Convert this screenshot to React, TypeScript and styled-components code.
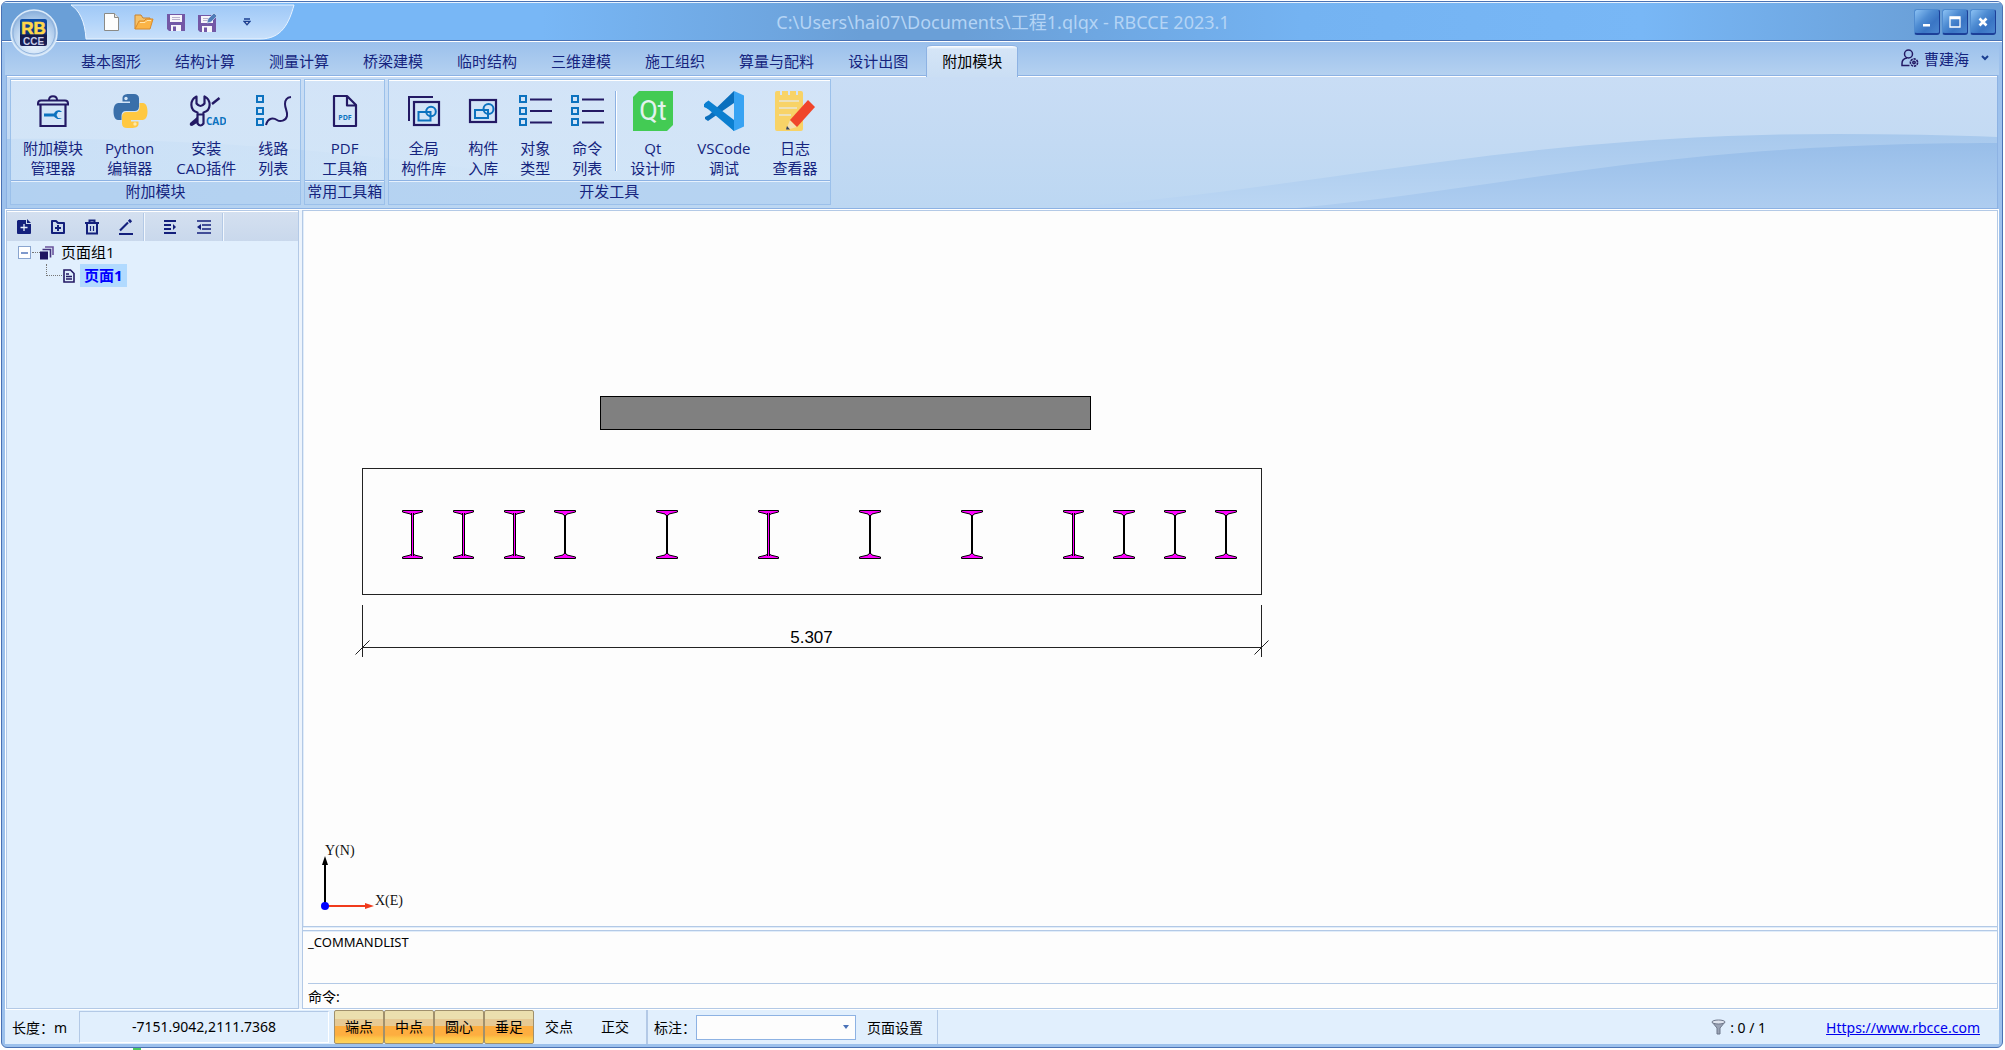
import React, { useState } from "react";
import styled, { createGlobalStyle, css } from "styled-components";

const GlobalStyle = createGlobalStyle`
  * { box-sizing: border-box; }
  body { margin: 0; background: #ffffff; }
  button, input, select { font: inherit; color: inherit; margin: 0; }
  button { border: 0; padding: 0; background: none; cursor: default; }
`;

const uiFont = `"Open Sans", "Noto Sans CJK SC", sans-serif`;
const plainFont = `"Noto Sans", "Noto Sans CJK SC", sans-serif`;
const navy = "#15247e";
const line = "#8db2e3";
const softLine = "#b3c9e6";

/* ---------- window frame ---------- */

const Desktop = styled.div`
  display: flex;
  height: 100vh;
  min-height: 600px;
  padding: 1px 2px 2px 1px;
  background: linear-gradient(#4cc95f, #4cc95f) 133px 100% / 8px 2px no-repeat #ffffff;
  font-family: ${uiFont};
  font-size: 15px;
  color: ${navy};
`;

const AppWindow = styled.div`
  position: relative;
  flex: 1;
  min-width: 0;
  display: flex;
  flex-direction: column;
  border: 1px solid #4a72b4;
  border-radius: 6px;
  overflow: hidden;
  background: #9dc1ec;
`;

const TitleBar = styled.header`
  display: flex;
  align-items: center;
  height: 40px;
  flex: none;
  padding: 0 6px 0 68px;
  border-top: 1px solid #e6f2ff;
  border-bottom: 1px solid #ffffff;
  box-shadow: inset 0 -1px 0 #4a72b4;
  background: linear-gradient(90deg, #6a9fd7 0, #6a9fd7 4%, #78b7f6 14%, #78b7f6 27%, #6a9fd7 43%, #6a9fd7 48%, #74b3f2 65%, #78b7f6 82%, #6a9fd7 97%);
`;

const QuickAccess = styled.div`
  position: relative;
  display: flex;
  align-items: center;
  width: 226px;
  height: 37px;
  padding: 0 0 1px 26px;
`;

const QuickShape = styled.svg`
  position: absolute;
  inset: 0;
  width: 226px;
  height: 37px;
`;

const QuickButton = styled.button`
  position: relative;
  display: grid;
  place-items: center;
  width: 32px;
  height: 26px;
  & + &:last-child { margin-left: 7px; }
`;

const Title = styled.h1`
  flex: 1;
  margin: 0;
  padding-right: 204px;
  text-align: center;
  font-family: ${plainFont};
  font-size: 18px;
  font-weight: 400;
  line-height: 24px;
  color: #b4d4f5;
  white-space: nowrap;
`;

const WindowButtons = styled.div`
  display: flex;
  gap: 2px;
`;

const WindowButton = styled.button`
  display: grid;
  place-items: center;
  width: 26px;
  height: 26px;
  border: 1px solid #4f8bd0;
  border-right-color: #1c3f98;
  border-bottom: 2px solid #1c3f98;
  border-radius: 3px;
  background: linear-gradient(135deg, #8cc2f4 0%, #4d8bd2 40%, #3a75c4 65%, #4a86cf 100%);
`;

const Orb = styled.button`
  position: absolute;
  left: 8px;
  top: 6px;
  width: 48px;
  height: 50px;
  z-index: 2;
`;

/* ---------- ribbon ---------- */

const TabRow = styled.nav`
  display: flex;
  align-items: flex-end;
  justify-content: space-between;
  height: 33px;
  flex: none;
  margin: 0 3px;
  padding: 0 10px 0 60px;
  background: linear-gradient(#9bc0ec, #b4d1f0);
`;

const TabList = styled.div`
  display: flex;
  gap: 2px;
`;

const Tab = styled.button<{ $active?: boolean }>`
  position: relative;
  z-index: 1;
  height: 31px;
  padding: 0 15px;
  border: 1px solid transparent;
  border-bottom: 0;
  line-height: 31px;
  margin-bottom: -1px;
  ${(p) =>
    p.$active &&
    css`
      color: #000000;
      height: 32px;
      margin-bottom: -2px;
      border-color: ${line};
      border-radius: 6px 6px 0 0 / 3px 3px 0 0;
      background: linear-gradient(#ffffff 0, #d5e5f7 3px, #cadef4 100%);
    `}
`;

const UserButton = styled.button`
  display: flex;
  align-items: center;
  gap: 5px;
  height: 30px;
  margin-bottom: 2px;
  & > svg:last-child { margin-left: 7px; }
`;

const RibbonBody = styled.section`
  position: relative;
  display: flex;
  align-items: flex-start;
  gap: 3px;
  height: 134px;
  flex: none;
  margin: 0 4px;
  padding: 3px;
  border: 1px solid ${line};
  box-shadow: inset 0 1px 0 #ffffff;
  background: linear-gradient(#c9ddf5, #c3daf3 50%, #bcd7f2);
`;

const Swoosh = styled.svg`
  position: absolute;
  inset: 1px 0 0 0;
  width: 100%;
  height: 131px;
`;

const Group = styled.div`
  position: relative;
  display: flex;
  flex-direction: column;
  height: 126px;
  border: 1px solid #9bc0ea;
  background: linear-gradient(rgba(214, 230, 248, 0.75), rgba(224, 240, 252, 0.55));
  box-shadow: inset 0 1px 0 #ffffff;
`;

const GroupBody = styled.div`
  display: flex;
  justify-content: center;
  gap: 2px;
  flex: 1;
  padding: 11px 2px 0;
`;

const GroupTitle = styled.div`
  height: 24px;
  flex: none;
  padding: 0 2px;
  border-top: 1px solid ${line};
  box-shadow: inset 0 1px 0 #e6f1fd;
  background: rgba(160, 196, 236, 0.55);
  text-align: center;
  line-height: 20px;
  white-space: nowrap;
`;

const RibbonButton = styled.button`
  display: flex;
  flex-direction: column;
  align-items: center;
  padding: 0 10px;
  line-height: 20px;
  text-align: center;
  white-space: nowrap;
  & > svg { flex: none; margin: 0 -5px 7px; }
`;

const RibbonDivider = styled.i`
  width: 2px;
  height: 80px;
  margin: 0 1px;
  border-left: 1px solid ${line};
  background: #ffffff;
`;

/* ---------- workspace ---------- */

const Workspace = styled.main`
  display: flex;
  flex: 1;
  min-height: 0;
  margin: 0 3px;
  padding: 1px;
  background: #ffffff;
`;

const Sidebar = styled.aside`
  width: 293px;
  flex: none;
  border: 1px solid ${softLine};
  box-shadow: inset 0 1px 0 #ffffff;
  background: #e1effd;
`;

const SideToolbar = styled.div`
  display: flex;
  align-items: center;
  height: 30px;
  padding-top: 1px;
  border-top: 1px solid #ffffff;
  background: linear-gradient(#d4e0f0, #c9d8ec);
`;

const SideButtons = styled.div<{ $wide?: boolean }>`
  display: flex;
  align-items: center;
  height: 100%;
  padding: ${(p) => (p.$wide ? "0 1px 0 9px" : "0")};
  border-right: 1px solid #b3c9e6;
  box-shadow: 1px 0 0 #f2f7fd;
`;

const ToolButton = styled.button`
  display: grid;
  place-items: center;
  width: 34px;
  height: 26px;
`;

const Tree = styled.ul`
  margin: 0;
  padding: 0 0 0 10px;
  list-style: none;
  font-size: 15px;
  color: #000000;
`;

const TreeRow = styled.div<{ $child?: boolean }>`
  display: flex;
  align-items: center;
  height: 23px;
  padding-left: ${(p) => (p.$child ? "29px" : "0")};
`;

const Expander = styled.button`
  display: grid;
  place-items: center;
  width: 13px;
  height: 13px;
  margin: 0 9px 0 1px;
  border: 1px solid #8aa5cf;
  background: #ffffff;
  position: relative;
  &::before { content: ""; width: 7px; height: 2px; background: #7f99cc; }
  &::after { content: ""; position: absolute; left: 13px; top: 5px; width: 8px; border-top: 1px dotted #777777; }
`;

const Elbow = styled.i`
  width: 16px;
  height: 12px;
  margin: 0 1px 11px 0;
  border-left: 1px dotted #777777;
  border-bottom: 1px dotted #777777;
`;

const TreeLabel = styled.span<{ $selected?: boolean }>`
  height: 23px;
  line-height: 23px;
  margin-left: ${(p) => (p.$selected ? "5px" : "3px")};
  padding: 0 4px;
  ${(p) => p.$selected && css`background: #b1daff; color: #0000ff; font-weight: 700;`}
`;

const Splitter = styled.div`
  width: 3px;
  flex: none;
  background: #edf4fc;
`;

const Main = styled.div`
  flex: 1;
  min-width: 0;
  display: flex;
  flex-direction: column;
  border: 1px solid ${softLine};
  background: #fdfdfd;
  color: #000000;
  font-family: ${plainFont};
  font-size: 14px;
`;

const Canvas = styled.div`
  position: relative;
  flex: 1;
  min-height: 0;
  overflow: hidden;
  border-left: 1px solid #e1edfa;
`;

const Drawing = styled.svg`
  display: block;
  width: 100%;
  height: 100%;
`;

const Axes = styled.svg`
  position: absolute;
  left: 10px;
  bottom: 8px;
  width: 100px;
  height: 78px;
`;

const CommandPane = styled.section`
  flex: none;
  border-top: 1px solid #b3c9e6;
  padding-left: 5px;
  background: linear-gradient(#e1edfa 0 1px, #fdfdfd 1px 3px, #b3c9e6 3px 4px, #e1edfa 4px 5px, #fdfdfd 5px);
`;

const CommandLog = styled.div`
  height: 57px;
  padding-top: 5px;
  font-size: 13px;
  line-height: 20px;
  border-bottom: 1px solid ${softLine};
`;

const CommandPrompt = styled.label`
  display: flex;
  align-items: center;
  height: 24px;
  line-height: 24px;
  padding-top: 2px;
`;

const CommandInput = styled.input`
  flex: 1;
  height: 20px;
  border: 0;
  outline: 0;
  background: transparent;
`;

/* ---------- status bar ---------- */

const StatusBar = styled.footer`
  display: flex;
  align-items: center;
  height: 34px;
  flex: none;
  margin: 0 3px 3px;
  background: #e1effd;
  color: #000000;
  font-family: ${plainFont};
  font-size: 14px;
  white-space: nowrap;
`;

const UnitLabel = styled.span`
  width: 74px;
  padding-left: 7px;
`;

const Coordinates = styled.output`
  width: 250px;
  height: 32px;
  margin-right: 5px;
  border: 1px solid #ffffff;
  border-left-color: ${softLine};
  border-top-color: ${softLine};
  line-height: 30px;
  text-align: center;
`;

const SnapButton = styled.button<{ $on?: boolean }>`
  width: 50px;
  height: 34px;
  line-height: 32px;
  border: 1px solid transparent;
  border-radius: 2px;
  & + &:nth-of-type(6) { margin: 0 6px; }
  ${(p) =>
    p.$on &&
    css`
      border-color: #a0906c;
      background: linear-gradient(#ebdfae 0 8px, #e6c994 8px 15px, #fdae40 15px 24px, #fdc549 27px, #ffd35b);
    `}
`;

const StatusDivider = styled.i<{ $thick?: boolean }>`
  width: ${(p) => (p.$thick ? "2px" : "1px")};
  height: 34px;
  background: ${softLine};
`;

const AnnotationField = styled.label`
  display: flex;
  align-items: center;
  margin-left: 6px;
`;

const SelectWrap = styled.span`
  position: relative;
  display: block;
  & > svg { position: absolute; right: 6px; top: 10px; pointer-events: none; }
`;

const AnnotationSelect = styled.select`
  display: block;
  appearance: none;
  width: 160px;
  height: 25px;
  padding: 0 20px 0 6px;
  border: 1px solid ${line};
  border-radius: 0;
  background: #fdfdfd;
`;

const PageSetup = styled.button`
  padding: 0 14px 0 11px;
  height: 34px;
`;

const FilterStatus = styled.span`
  display: flex;
  align-items: center;
  gap: 4px;
  margin-left: auto;
`;

const SiteLink = styled.a`
  margin: 0 19px 0 60px;
  color: #0000ee;
  text-decoration: underline;
`;

/* ---------- icons ---------- */

const ink = "#231964";
const azure = "#0c72bf";

const IconBox = ({ children }: { children: React.ReactNode }) => (
  <svg width="40" height="40" viewBox="0 0 40 40" fill="none" aria-hidden="true">
    {children}
  </svg>
);

const ModuleIcon = () => (
  <IconBox>
    <g stroke={ink} strokeWidth="2">
      <path d="M7.500 14V35h25V14" strokeWidth="2.200" />
      <path d="M5 13.500v-1q0-3 3-3h24q3 0 3 3v1z" />
      <path d="M16 9c0-5 8-5 8 0" />
    </g>
    <path d="M11 22.500h10c2-4 6-4 8-1.500h-4l-1.500 3 1.500 3h4c-3 2-6 1-8-1.500H11z" fill={azure} />
  </IconBox>
);

const PythonIcon = () => (
  <IconBox>
    <path d="M19 3h5c3 0 5 1.500 5 4.500v8c0 3-2 4.500-4.500 4.500H16c-3 0-4.500 2-4.500 4.500V29H8c-3 0-4.500-4-4.500-8.500S5 12 8.500 12H20v-1.500h-7.500V7.500C12.500 4 15 3 19 3z" fill="#3a6faa" />
    <path d="M21 37h-4c-3 0-5-1.500-5-4.500v-7c0-3 2-4.500 4.500-4.500H25c3 0 4.500-2 4.500-4.500V12H33c3 0 4.500 4 4.500 8.500S36 29 32.500 29H21v1.500h7.500V33c0 3-3 4-7.500 4z" fill="#ffc841" />
    <circle cx="16" cy="7.500" r="1.700" fill="#d5e6f7" />
    <circle cx="25" cy="33" r="1.700" fill="#ffe9a8" />
  </IconBox>
);

const CadIcon = () => (
  <IconBox>
    <g stroke={ink} strokeWidth="2.200" strokeLinejoin="round">
      <path d="M10.500 5.500c-7 3.500-7 14 1 16v11q3 4 6 0v-11c8-2 8-12.500 1-16v7q-4 5-8 0z" />
      <path d="M12 23.500h5.500" />
      <path d="M26 13l7.500-6" strokeWidth="2.400" />
    </g>
    <path d="M11 26v6l-5 3q-3 0-2-3z" fill={ink} />
    <text x="20" y="34" fontFamily="Open Sans, sans-serif" fontSize="10" fontWeight="700" fill={azure}>CAD</text>
  </IconBox>
);

const Checks = () => (
  <g stroke={azure} strokeWidth="2">
    <rect x="5" y="5" width="6" height="6" />
    <rect x="5" y="17" width="6" height="6" />
    <rect x="5" y="28" width="6" height="6" />
  </g>
);

const RouteIcon = () => (
  <IconBox>
    <g transform="translate(-1 0)">
      <Checks />
      <path d="M14 34c2-8 8-7 11-5s9 1 10-4c1-4-2-7-2-12 0-4 2-6.500 6-7" stroke={ink} strokeWidth="2" />
    </g>
  </IconBox>
);

const ListIcon = () => (
  <IconBox>
    <Checks />
    <path d="M15 8.500h22M15 20h22M15 31.500h22" stroke={ink} strokeWidth="2" />
  </IconBox>
);

const PdfIcon = () => (
  <IconBox>
    <path d="M9 5h13l9 9v21H9zM22 5v9.500h9" stroke={ink} strokeWidth="2.200" strokeLinejoin="round" />
    <text x="20" y="29" textAnchor="middle" fontFamily="Open Sans, sans-serif" fontSize="7" fontWeight="700" fill={azure}>PDF</text>
  </IconBox>
);

const LibraryIcon = () => (
  <IconBox>
    <path d="M5 30V6h24" stroke={ink} strokeWidth="2" />
    <rect x="10" y="11" width="25" height="23" stroke={ink} strokeWidth="2.200" />
    <rect x="14.500" y="21" width="12" height="8.500" stroke={azure} strokeWidth="2" />
    <circle cx="27" cy="20.500" r="4.800" stroke={azure} strokeWidth="2" />
  </IconBox>
);

const StoreIcon = () => (
  <IconBox>
    <rect x="7" y="9" width="26" height="22" stroke={ink} strokeWidth="2.200" />
    <rect x="12" y="19" width="13" height="8" stroke={azure} strokeWidth="2" />
    <circle cx="25.500" cy="18" r="5" stroke={azure} strokeWidth="2" />
  </IconBox>
);

const QtIcon = () => (
  <IconBox>
    <path d="M6 0h34v34l-6 6H0V6z" fill="#43cb54" />
    <text x="20" y="29" textAnchor="middle" fontFamily="Roboto, sans-serif" fontSize="27" fill="#e2f2ee">Qt</text>
  </IconBox>
);

const CodeIcon = () => (
  <IconBox>
    <path d="M30 0L5 24l-4 2 0 2 3 2L30 12z" fill="#0b6fbd" />
    <path d="M30 40L5 14.500 4 11 0 13v3l30 14z" fill="#0b7fd0" />
    <path d="M1 12l3.500-2.500L30 29v11L1 15.500z" fill="#0b7fd0" />
    <path d="M30 0l10 4.500v31L30 40z" fill="#38a3f3" />
  </IconBox>
);

const LogIcon = () => (
  <IconBox>
    <path d="M0 2q0-2 2-2h3v4h2V0h6v4h2V0h6v4h2V0h3q2 0 2 2v36q0 2-2 2H2q-2 0-2-2z" fill="#f8d367" />
    <path d="M4 10h20M4 17h18M4 24h12" stroke="#e7e6d8" strokeWidth="1.600" />
    <path d="M15 29l-4 10 11-3z" fill="#f5dfb0" />
    <path d="M12 35l-1 3.500h4z" fill="#33415c" />
    <path d="M33 9l7 7-18 20-7-7z" fill="#f0452b" />
  </IconBox>
);

const SideIcon = ({ children }: { children: React.ReactNode }) => (
  <svg width="16" height="16" viewBox="0 0 16 16" fill="none" stroke="#14207c" strokeWidth="2" aria-hidden="true">
    {children}
  </svg>
);

const FloppyBase = () => (
  <>
    <path d="M0 1h18v17H2l-2-2z" fill="#7358a6" />
    <rect x="3" y="2" width="12" height="7" fill="#f7f5fa" />
    <path d="M5 4.500h8M5 6.500h8" stroke="#b9b0cc" />
    <path d="M4 12h10v6H4z" fill="#f7f5fa" />
    <path d="M6 13.500h3V18H6z" fill="#7358a6" />
  </>
);

/* ---------- drawing on the canvas ---------- */

const beams = [
  { x: 108.5, open: true },
  { x: 159.5, open: true },
  { x: 210.5, open: true },
  { x: 261, open: false },
  { x: 363, open: false },
  { x: 464.5, open: true },
  { x: 566, open: false },
  { x: 668, open: false },
  { x: 769.5, open: true },
  { x: 820, open: false },
  { x: 871, open: false },
  { x: 922, open: false },
];

const Beam = ({ x, open }: { x: number; open: boolean }) => {
  const w = open ? 10 : 10.5;
  return (
    <g transform={`translate(${x} 299)`} stroke="#000000" strokeWidth="1">
      <path d={`M${-w} .5H${w}V2L2 4 1 5.500H-1L-2 4 ${-w} 2z`} fill="#ff00ff" />
      <path d={`M${-w} 48.500H${w}V47L2 45 1 43.500H-1L-2 45 ${-w} 47z`} fill="#ff00ff" />
      {open ? (
        <>
          <path d="M0 3V46" strokeWidth="3" />
          <path d="M0 2V47" stroke="#ff00ff" />
        </>
      ) : (
        <path d="M0 5V44" strokeWidth="2" />
      )}
    </g>
  );
};

const tabs = ["基本图形", "结构计算", "测量计算", "桥梁建模", "临时结构", "三维建模", "施工组织", "算量与配料", "设计出图", "附加模块"];

type Command = { icon: React.FC; top: string; bottom: string } | null;
const groups: { title: string; commands: Command[] }[] = [
  {
    title: "附加模块",
    commands: [
      { icon: ModuleIcon, top: "附加模块", bottom: "管理器" },
      { icon: PythonIcon, top: "Python", bottom: "编辑器" },
      { icon: CadIcon, top: "安装", bottom: "CAD插件" },
      { icon: RouteIcon, top: "线路", bottom: "列表" },
    ],
  },
  { title: "常用工具箱", commands: [{ icon: PdfIcon, top: "PDF", bottom: "工具箱" }] },
  {
    title: "开发工具",
    commands: [
      { icon: LibraryIcon, top: "全局", bottom: "构件库" },
      { icon: StoreIcon, top: "构件", bottom: "入库" },
      { icon: ListIcon, top: "对象", bottom: "类型" },
      { icon: ListIcon, top: "命令", bottom: "列表" },
      null,
      { icon: QtIcon, top: "Qt", bottom: "设计师" },
      { icon: CodeIcon, top: "VSCode", bottom: "调试" },
      { icon: LogIcon, top: "日志", bottom: "查看器" },
    ],
  },
];

export default function App() {
  const [activeTab, setActiveTab] = useState("附加模块");
  const [snaps, setSnaps] = useState<Record<string, boolean>>({
    端点: true,
    中点: true,
    圆心: true,
    垂足: true,
    交点: false,
    正交: false,
  });

  return (
    <Desktop>
      <GlobalStyle />
      <AppWindow>
        <Orb aria-label="RBCCE">
          <svg width="48" height="50" viewBox="0 0 48 50">
            <defs>
              <radialGradient id="orb" cx="50%" cy="70%" r="65%">
                <stop offset="0" stopColor="#f4faff" />
                <stop offset=".55" stopColor="#c6dcf4" />
                <stop offset="1" stopColor="#8fb4de" />
              </radialGradient>
              <linearGradient id="tile" x1="0" y1="0" x2="0" y2="1">
                <stop offset="0" stopColor="#0f4fa8" />
                <stop offset=".55" stopColor="#0b3478" />
                <stop offset=".6" stopColor="#131a4a" />
                <stop offset="1" stopColor="#1a1f58" />
              </linearGradient>
            </defs>
            <circle cx="24" cy="25" r="23" fill="url(#orb)" stroke="#dcebfa" strokeWidth="1.500" />
            <circle cx="24" cy="25" r="21" fill="none" stroke="#8fb2dc" strokeWidth="1" />
            <rect x="10" y="11" width="27" height="27" rx="2" fill="url(#tile)" />
            <text x="23.500" y="26" textAnchor="middle" fontFamily="Liberation Sans, sans-serif" fontSize="17" fontWeight="700" fill="#ffd84a" stroke="#ffd84a" strokeWidth=".6">RB</text>
            <text x="23.500" y="36.500" textAnchor="middle" fontFamily="Liberation Sans, sans-serif" fontSize="10" fontWeight="700" fill="#c9cde8">CCE</text>
          </svg>
        </Orb>

        <TitleBar>
          <QuickAccess>
            <QuickShape viewBox="0 0 226 37" aria-hidden="true">
              <defs>
                <linearGradient id="quick" x1="0" y1="0" x2="0" y2="1">
                  <stop offset="0" stopColor="#9fc8f6" />
                  <stop offset=".5" stopColor="#b2d4fa" />
                  <stop offset="1" stopColor="#c9e0fa" />
                </linearGradient>
              </defs>
              <path d="M1 1h223c-5 18-12 34-34 34H16C15 17 9 6 1 1z" fill="url(#quick)" stroke="#e8f3ff" />
            </QuickShape>
            <QuickButton aria-label="新建">
              <svg width="18" height="20" viewBox="0 0 18 20">
                <path d="M1.500 1.500h10l4 4v13h-14z" fill="#fdfdfd" stroke="#8b8a86" />
                <path d="M11.500 1.500v4h4" fill="#e6e6e6" stroke="#8b8a86" />
              </svg>
            </QuickButton>
            <QuickButton aria-label="打开">
              <svg width="20" height="18" viewBox="0 0 20 18">
                <path d="M1 16V2h6l2 3h7v4" fill="#f5c26a" stroke="#c9822f" />
                <path d="M1 16l4-8h5l2-2h7l-3 10z" fill="#fbb446" stroke="#d98a2b" />
                <path d="M6 9.500h5l2-2h4" stroke="#ffe6ae" fill="none" />
              </svg>
            </QuickButton>
            <QuickButton aria-label="保存">
              <svg width="18" height="18" viewBox="0 0 18 18"><FloppyBase /></svg>
            </QuickButton>
            <QuickButton aria-label="另存为">
              <svg width="20" height="20" viewBox="0 -2 20 20">
                <FloppyBase />
                <path d="M9 9l1-4 6-6 3 3-6 6z" fill="#4f7cb8" stroke="#dfe9f6" strokeWidth=".6" />
              </svg>
            </QuickButton>
            <QuickButton aria-label="自定义快速访问工具栏">
              <svg width="8" height="8" viewBox="0 0 8 8" fill="none" stroke="#1b3f91">
                <path d="M1 1h6" strokeWidth="1.500" />
                <path d="M1 3.500h6L4 6.800z" strokeWidth="1.300" fill="#ffffff" />
              </svg>
            </QuickButton>
          </QuickAccess>
          <Title>C:\Users\hai07\Documents\工程1.qlqx - RBCCE 2023.1</Title>
          <WindowButtons>
            <WindowButton aria-label="最小化">
              <svg width="12" height="12"><rect x="2" y="8" width="7" height="2.500" fill="#ffffff" /></svg>
            </WindowButton>
            <WindowButton aria-label="最大化">
              <svg width="12" height="12"><path d="M1 1h10v10H1z" fill="none" stroke="#ffffff" strokeWidth="1.300" /><path d="M1 2h10" stroke="#ffffff" strokeWidth="2.500" /></svg>
            </WindowButton>
            <WindowButton aria-label="关闭">
              <svg width="12" height="12"><path d="M2.500 2.500l7 7M9.500 2.500l-7 7" stroke="#ffffff" strokeWidth="2.600" /></svg>
            </WindowButton>
          </WindowButtons>
        </TitleBar>

        <TabRow>
          <TabList>
            {tabs.map((t) => (
              <Tab key={t} $active={t === activeTab} onClick={() => setActiveTab(t)}>{t}</Tab>
            ))}
          </TabList>
          <UserButton>
            <svg width="18" height="18" viewBox="0 0 18 18" fill="none" stroke={ink} strokeWidth="1.500">
              <circle cx="7.500" cy="5" r="4" />
              <path d="M8.500 16.500H1v-2c0-3 2-5 5-5.500" />
              <circle cx="13" cy="13.500" r="3.600" strokeWidth="1.600" strokeDasharray="2.400 .8" />
              <circle cx="13" cy="13.500" r="1.200" />
            </svg>
            曹建海
            <svg width="8" height="6" viewBox="0 0 8 6" fill="none" stroke="#1b3f91" strokeWidth="2"><path d="M1 1l3 3 3-3" /></svg>
          </UserButton>
        </TabRow>

        <RibbonBody>
          <Swoosh viewBox="0 0 1991 131" preserveAspectRatio="none" aria-hidden="true">
            <defs>
              <linearGradient id="waveA" x1="0" y1="0" x2="0" y2="1">
                <stop offset="0" stopColor="#a8c9ed" />
                <stop offset="1" stopColor="#bbd6f3" />
              </linearGradient>
              <linearGradient id="waveB" x1="0" y1="0" x2="0" y2="1">
                <stop offset="0" stopColor="#98bee9" />
                <stop offset="1" stopColor="#aecdf0" />
              </linearGradient>
              <linearGradient id="waveC" x1="0" y1="0" x2="1" y2="0">
                <stop offset="0" stopColor="#aacbef" />
                <stop offset="1" stopColor="#bdd7f2" stopOpacity="0" />
              </linearGradient>
            </defs>
            <path d="M0 62C220 60 440 80 700 131H0z" fill="url(#waveC)" />
            <path d="M1050 131C1300 115 1500 57 1830 57Q1920 57 1991 60V131z" fill="url(#waveA)" />
            <path d="M1290 131C1500 112 1650 66 1991 66V131z" fill="url(#waveB)" />
          </Swoosh>
          {groups.map((g) => (
            <Group key={g.title}>
              <GroupBody>
                {g.commands.map((c, i) => {
                  if (!c) return <RibbonDivider key={i} />;
                  const Icon = c.icon;
                  return (
                    <RibbonButton key={i}>
                      <Icon />
                      <span>{c.top}</span>
                      <span>{c.bottom}</span>
                    </RibbonButton>
                  );
                })}
              </GroupBody>
              <GroupTitle>{g.title}</GroupTitle>
            </Group>
          ))}
        </RibbonBody>

        <Workspace>
          <Sidebar>
            <SideToolbar>
              <SideButtons>
                <ToolButton aria-label="新建页面">
                  <SideIcon>
                    <path d="M2 1h8v4h5v9q0 1-1 1H2q-1 0-1-1V2z" fill="#14207c" stroke="none" />
                    <path d="M11 0l4 4h-4z" fill="#14207c" stroke="none" />
                    <path d="M8 5v7M4.500 8.500h7" stroke="#e6eefa" strokeWidth="1.300" />
                  </SideIcon>
                </ToolButton>
                <ToolButton aria-label="新建页面组">
                  <SideIcon>
                    <path d="M2 14V2h4l2 2h6v10z" strokeLinejoin="round" />
                    <path d="M8 6v6M5 9h6" />
                  </SideIcon>
                </ToolButton>
                <ToolButton aria-label="删除">
                  <SideIcon>
                    <path d="M1 4h14M5.500 4V1.500h5V4M3 4v10.500h10V4" />
                    <path d="M6.500 7v5M9.500 7v5" strokeWidth="1.200" />
                  </SideIcon>
                </ToolButton>
                <ToolButton aria-label="重命名">
                  <SideIcon>
                    <path d="M1 15h14" />
                    <path d="M2 11.500L10 3.500" strokeWidth="2.200" />
                    <path d="M11 3l2-2" strokeWidth="3.200" />
                  </SideIcon>
                </ToolButton>
              </SideButtons>
              <SideButtons $wide>
                <ToolButton aria-label="缩进">
                  <SideIcon><path d="M2 2h12M2 6h7M2 10h7M2 14h12" /><path d="M11 5l3 3-3 3z" fill="#14207c" stroke="none" /></SideIcon>
                </ToolButton>
                <ToolButton aria-label="取消缩进">
                  <SideIcon><path d="M1 2h14M6 6h9M6 10h9M1 14h14" strokeWidth="1.500" /><path d="M5 5L1 8l4 3z" fill="#14207c" stroke="none" /></SideIcon>
                </ToolButton>
              </SideButtons>
            </SideToolbar>
            <Tree>
              <li>
                <TreeRow>
                  <Expander aria-label="折叠" />
                  <svg width="14" height="14" viewBox="0 0 14 14" fill="none">
                    <path d="M5 1h8v8" stroke="#6a549c" strokeWidth="1.600" />
                    <path d="M2.500 3.500h8v8" stroke="#463580" strokeWidth="1.600" />
                    <rect x="0" y="5.500" width="8" height="8" fill="#1f1560" />
                  </svg>
                  <TreeLabel>页面组1</TreeLabel>
                </TreeRow>
                <TreeRow $child>
                  <Elbow />
                  <svg width="12" height="14" viewBox="0 0 12 14" fill="none" stroke="#231964">
                    <path d="M1 1h6.500L11 4.500V13H1z" strokeWidth="1.600" />
                    <path d="M3 5h3M3 7.500h6M3 10h6" strokeWidth="1.300" />
                  </svg>
                  <TreeLabel $selected>页面1</TreeLabel>
                </TreeRow>
              </li>
            </Tree>
          </Sidebar>
          <Splitter />
          <Main>
            <Canvas>
              <Drawing>
                <rect x="296.500" y="185.500" width="490" height="33" fill="#808080" stroke="#000000" />
                <g fill="none" stroke="#222222">
                  <rect x="58.500" y="257.500" width="899" height="126" />
                  <path d="M58.500 394V446M957.500 394V446M58.500 436.500H957.500" />
                  <path d="M51.500 443.500l14-14M950.500 443.500l14-14" />
                </g>
                {beams.map((b) => <Beam key={b.x} {...b} />)}
                <text x="507.500" y="432" textAnchor="middle" fontFamily="Liberation Sans, Arial, sans-serif" fontSize="17">5.307</text>
              </Drawing>
              <Axes viewBox="0 0 100 78">
                <path d="M11 66V22" stroke="#000000" strokeWidth="2" />
                <path d="M8 25l3-9 3 9z" fill="#000000" />
                <path d="M11 66H52" stroke="#f03a1c" strokeWidth="2" />
                <path d="M51 63l9 3-9 3z" fill="#f03a1c" />
                <circle cx="11" cy="66" r="4" fill="#0000ff" />
                <g fontFamily="Liberation Serif, serif" fontSize="14" fill="#111111">
                  <text x="11" y="15">Y(N)</text>
                  <text x="61" y="65">X(E)</text>
                </g>
              </Axes>
            </Canvas>
            <CommandPane>
              <CommandLog>_COMMANDLIST</CommandLog>
              <CommandPrompt>
                命令:
                <CommandInput />
              </CommandPrompt>
            </CommandPane>
          </Main>
        </Workspace>

        <StatusBar>
          <UnitLabel>长度：m</UnitLabel>
          <Coordinates>-7151.9042,2111.7368</Coordinates>
          {Object.entries(snaps).map(([name, on]) => (
            <SnapButton key={name} $on={on} aria-pressed={on} onClick={() => setSnaps({ ...snaps, [name]: !on })}>
              {name}
            </SnapButton>
          ))}
          <StatusDivider $thick />
          <AnnotationField>
            标注：
            <SelectWrap>
              <AnnotationSelect defaultValue=""><option value=""></option></AnnotationSelect>
              <svg width="8" height="5" viewBox="0 0 8 5"><path d="M1 0h6L4 4z" fill="#4a72b8" /></svg>
            </SelectWrap>
          </AnnotationField>
          <PageSetup>页面设置</PageSetup>
          <StatusDivider />
          <FilterStatus>
            <svg width="15" height="16" viewBox="0 0 15 16">
              <path d="M1 3l5 6v6h3V9l5-6z" fill="#9aa3b5" stroke="#6d7689" />
              <ellipse cx="7.500" cy="3" rx="6.500" ry="2" fill="#dfe4ee" stroke="#6d7689" />
            </svg>
            : 0 / 1
          </FilterStatus>
          <SiteLink href="https://www.rbcce.com">Https://www.rbcce.com</SiteLink>
        </StatusBar>
      </AppWindow>
    </Desktop>
  );
}
